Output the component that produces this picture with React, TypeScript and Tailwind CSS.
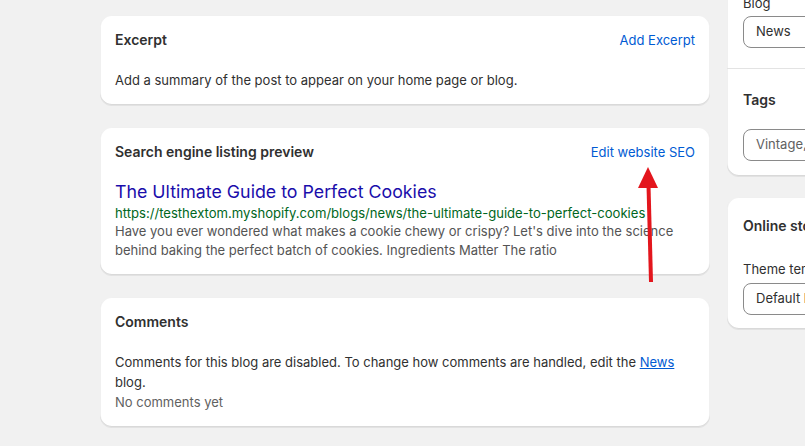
import React from 'react'

const card =
  'bg-white rounded-xl shadow-[0_1px_0_0_rgba(26,26,26,0.07),inset_0_-1px_0_0_#d9d9d9,inset_0_0_0_1px_rgba(0,0,0,0.06)]'

function CardHeader({ title, action }: { title: string; action?: string }) {
  return (
    <div className="flex items-center justify-between h-5">
      <h2 className="text-[14px] leading-5 font-semibold text-[#303030]">{title}</h2>
      {action && <a className="text-[13px] leading-5 text-[#005bd3] cursor-pointer">{action}</a>}
    </div>
  )
}

function Field({ value, muted }: { value: string; muted?: boolean }) {
  return (
    <div
      className={
        'h-8 rounded-lg border border-[#8a8a8a] px-3 flex items-center text-[13px] whitespace-nowrap ' +
        (muted ? 'text-[#616161]' : 'text-[#303030]')
      }
    >
      {value}
    </div>
  )
}

export default function App() {
  return (
    <div
      className="relative w-full h-[446px] overflow-hidden bg-[#f1f1f1] text-[#303030]"
      style={{ fontFamily: 'Inter, "Noto Sans", sans-serif' }}
    >
      <div className="flex gap-[17px] pl-[100px]">
        {/* main column */}
        <div className="w-[610px] shrink-0 flex flex-col gap-[22px] pt-[15px]">
          <section className={card + ' px-[15px] py-[15px]'}>
            <CardHeader title="Excerpt" action="Add Excerpt" />
            <p className="mt-5 text-[13px] leading-5">Add a summary of the post to appear on your home page or blog.</p>
          </section>

          <section className={card + ' px-[15px] py-[15px]'}>
            <CardHeader title="Search engine listing preview" action="Edit website SEO" />
            <div className="mt-[18px]">
              <div className="text-[17.8px] leading-6 text-[#1a0dab]">The Ultimate Guide to Perfect Cookies</div>
              <div className="text-[13.1px] leading-[18px] text-[#006621]">
                https://testhextom.myshopify.com/blogs/news/the-ultimate-guide-to-perfect-cookies
              </div>
              <p className="text-[13px] leading-[19px] text-[#545454]">
                Have you ever wondered what makes a cookie chewy or crispy? Let's dive into the science
                <br />
                behind baking the perfect batch of cookies. Ingredients Matter The ratio
              </p>
            </div>
          </section>

          <section className={card + ' px-[15px] py-[15px]'}>
            <CardHeader title="Comments" />
            <div className="mt-5 text-[13px] leading-5">
              <p>
                Comments for this blog are disabled. To change how comments are handled, edit the{' '}
                <a className="text-[#005bd3] underline cursor-pointer">News</a> blog.
              </p>
              <p className="text-[#616161]">No comments yet</p>
            </div>
          </section>
        </div>

        {/* sidebar */}
        <aside className="w-[290px] shrink-0 flex flex-col gap-[21px] -mt-[60px]">
          <div className={card}>
            <div className="px-4 pt-[53px] pb-5">
              <div className="text-[13px] leading-5 mb-[3px]">Blog</div>
              <Field value="News" />
            </div>
            <div className="border-t border-[#e3e3e3] px-4 pt-[21px] pb-[15px]">
              <h2 className="text-[14px] leading-5 font-semibold">Tags</h2>
              <div className="mt-[19px]">
                <Field value="Vintage, cotton, summer" muted />
              </div>
            </div>
          </div>

          <div className={card + ' px-4 pt-[19px] pb-[14px]'}>
            <h2 className="text-[14px] leading-5 font-semibold">Online store</h2>
            <div className="mt-[23px] text-[13px] leading-5 mb-1">Theme template</div>
            <Field value="Default blog post" />
          </div>
        </aside>
      </div>

      {/* red pointer arrow */}
      <svg className="absolute left-[630px] top-[160px]" width="40" height="130" viewBox="0 0 40 130">
        <line x1="18.5" y1="25" x2="21" y2="122" stroke="#e3161d" strokeWidth="4" />
        <polygon points="18,7 8,28 28,28" fill="#e3161d" />
      </svg>
    </div>
  )
}
